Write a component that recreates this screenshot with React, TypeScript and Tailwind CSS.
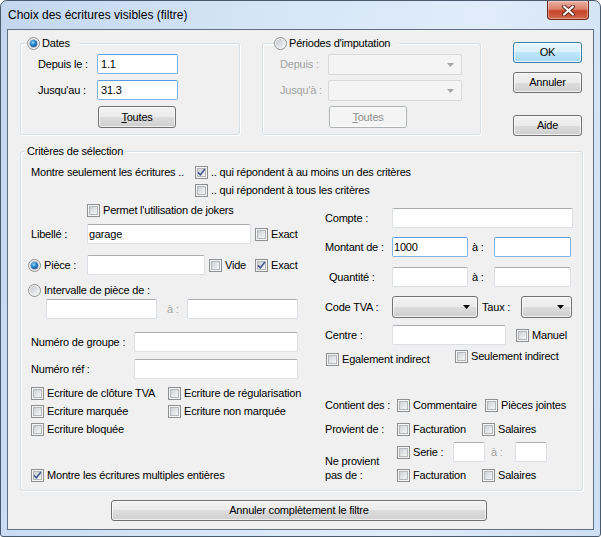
import React from 'react';

type Props = { children?: React.ReactNode; className?: string };

function Check({ checked = false }: { checked?: boolean }) {
  return (
    <span className="flex h-[13px] w-[13px] shrink-0 items-center justify-center border border-[#8e8f8f] bg-[#f4f4f4]">
      <span className="flex h-[9px] w-[9px] items-center justify-center border border-[#b4b8bd] bg-[linear-gradient(135deg,#cdd1d6,#f6f6f6)]">
        {checked && (
          <svg width="9" height="9" viewBox="0 0 9 9" className="shrink-0 overflow-visible">
            <path d="M1 4.3 L3.4 6.8 L7.9 1" fill="none" stroke="#4a5d94" strokeWidth="1.7" />
          </svg>
        )}
      </span>
    </span>
  );
}

function Radio({ checked = false }: { checked?: boolean }) {
  return (
    <span className="flex h-[13px] w-[13px] shrink-0 items-center justify-center rounded-full border border-[#8e8f8f] bg-[#f4f4f4]">
      {checked ? (
        <span className="flex h-[9px] w-[9px] items-center justify-center rounded-full bg-[#b9bec5]">
          <span className="h-[7px] w-[7px] rounded-full bg-[radial-gradient(circle_at_40%_35%,#8fd6ff_0%,#1f7fc8_45%,#0a3568_100%)]" />
        </span>
      ) : (
        <span className="h-[9px] w-[9px] rounded-full bg-[linear-gradient(135deg,#c4c8ce,#f5f5f5)]" />
      )}
    </span>
  );
}

function CheckLabel({ checked = false, children, className = '' }: Props & { checked?: boolean }) {
  return (
    <div className={`flex h-[13px] items-center ${className}`}>
      <Check checked={checked} />
      <span className="ml-[3px] whitespace-nowrap">{children}</span>
    </div>
  );
}

function Field({ className = '', value = '', focus = false }: { className?: string; value?: string; focus?: boolean }) {
  const skin = focus
    ? 'border-[#7eb4ea] border-t-[#569de5]'
    : 'border-[#dbdfe6] border-t-[#abadb3]';
  return (
    <div className={`flex h-[20px] shrink-0 items-center rounded-[2px] border bg-white ${skin} ${className}`}>
      {value}
    </div>
  );
}

function Btn({ children, className = '', def = false, disabled = false }: Props & { def?: boolean; disabled?: boolean }) {
  const skin = disabled
    ? 'border-[#adb2b5] bg-[#f4f4f4] text-[#8d8d8d]'
    : def
    ? 'border-[#3c7fb1] bg-[linear-gradient(#eaf6fd_0%,#d9f0fc_50%,#bee6fd_50%,#a7d9f5_100%)]'
    : 'border-[#707070] bg-[linear-gradient(#f2f2f2_0%,#ebebeb_50%,#dddddd_50%,#cfcfcf_100%)]';
  return (
    <div className={`flex shrink-0 items-center justify-center rounded-[3px] border shadow-[inset_0_0_0_1px_rgba(255,255,255,0.7)] ${skin} ${className}`}>
      {children}
    </div>
  );
}

function Combo({ className = '', disabled = false }: { className?: string; disabled?: boolean }) {
  const skin = disabled
    ? 'rounded-[2px] border-[#d9d9d9] bg-[#f4f4f4]'
    : 'rounded-[3px] border-[#707070] bg-[linear-gradient(#f2f2f2_0%,#ebebeb_50%,#dddddd_50%,#cfcfcf_100%)] shadow-[inset_0_0_0_1px_rgba(255,255,255,0.7)]';
  return (
    <div className={`flex shrink-0 items-center justify-end border pr-[7px] ${skin} ${className}`}>
      <svg width="7" height="4" viewBox="0 0 7 4">
        <polygon points="0,0 7,0 3.5,4" fill={disabled ? '#a6a6a6' : '#000'} />
      </svg>
    </div>
  );
}

function Group({ legend, children, className = '' }: Props & { legend: React.ReactNode }) {
  return (
    <div className={`relative shrink-0 rounded-[3px] border border-[#d5dfe5] shadow-[inset_1px_1px_0_#fff,1px_1px_0_#fff] ${className}`}>
      {legend}
      {children}
    </div>
  );
}

export default function App() {
  return (
    <div className="h-[537px] w-[601px] bg-white font-['Liberation_Sans',Arial,sans-serif] text-[11px] leading-[13px] tracking-[-0.2px] text-black">
      <div className="flex h-full w-full flex-col rounded-t-[7px] rounded-b-[3px] border border-[#4a5a6d] bg-[linear-gradient(100deg,#c2d7ef_0%,#d6e6f7_40%,#e0ecf9_70%,#cddff4_100%)]">
        {/* title bar */}
        <div className="flex h-[28px] shrink-0 items-start justify-between pl-[7px]">
          <span className="mt-[7px] text-[12px] leading-[14px] tracking-normal">Choix des écritures visibles (filtre)</span>
          <div className="mr-[11px] flex h-[19px] w-[42px] items-center justify-center rounded-b-[4px] border border-t-0 border-[#6b2a1c] bg-[linear-gradient(#eab0a2_0%,#dc8069_45%,#c7432a_55%,#d2694b_100%)] shadow-[inset_0_0_0_1px_rgba(255,255,255,0.35)]">
            <svg width="13" height="11" viewBox="0 0 13 11">
              <path d="M2 1.5 L11 9.5 M11 1.5 L2 9.5" stroke="#5a2418" strokeWidth="4" strokeLinecap="round" />
              <path d="M2 1.5 L11 9.5 M11 1.5 L2 9.5" stroke="#fff" strokeWidth="2.2" strokeLinecap="round" />
            </svg>
          </div>
        </div>

        {/* client */}
        <div className="flex flex-1 px-[6px] pb-[6px]">
          <div className="flex-1 border border-[#5f7085] bg-[#f0f0f0] pl-[12px] pt-[13px]">
            <div className="flex items-start">
              {/* Dates */}
              <Group
                className="h-[92px] w-[220px]"
                legend={
                  <div className="absolute left-[6px] top-[-7px] flex h-[13px] items-center bg-[#f0f0f0] pr-[9px]">
                    <Radio checked />
                    <span className="ml-[2px]">Dates</span>
                  </div>
                }
              >
                <div className="pl-[17px] pt-[10px]">
                  <div className="flex h-[20px] items-center">
                    <span className="w-[59px]">Depuis le :</span>
                    <Field className="w-[81px] pl-[3px]" value="1.1" focus />
                  </div>
                  <div className="mt-[6px] flex h-[20px] items-center">
                    <span className="w-[59px]">Jusqu'au :</span>
                    <Field className="w-[81px] pl-[3px]" value="31.3" focus />
                  </div>
                  <Btn className="ml-[60px] mt-[6px] h-[22px] w-[78px]">
                    <span><span className="underline">T</span>outes</span>
                  </Btn>
                </div>
              </Group>

              {/* Périodes */}
              <Group
                className="ml-[22px] h-[92px] w-[219px]"
                legend={
                  <div className="absolute left-[11px] top-[-7px] flex h-[13px] items-center bg-[#f0f0f0] pr-[9px]">
                    <Radio />
                    <span className="ml-[2px]">Périodes d'imputation</span>
                  </div>
                }
              >
                <div className="pl-[17px] pt-[10px] text-[#a3a3a3]">
                  <div className="flex h-[21px] items-center">
                    <span className="w-[48px]">Depuis :</span>
                    <Combo className="h-[21px] w-[134px]" disabled />
                  </div>
                  <div className="mt-[5px] flex h-[21px] items-center">
                    <span className="w-[48px]">Jusqu'à :</span>
                    <Combo className="h-[21px] w-[134px]" disabled />
                  </div>
                  <Btn className="ml-[49px] mt-[5px] h-[22px] w-[78px]" disabled>
                    <span><span className="underline">T</span>outes</span>
                  </Btn>
                </div>
              </Group>

              {/* Buttons */}
              <div className="ml-[32px] mt-[-1px] flex w-[69px] flex-col">
                <Btn className="h-[21px] w-[69px]" def>OK</Btn>
                <Btn className="mt-[9px] h-[21px] w-[69px]">Annuler</Btn>
                <Btn className="mt-[22px] h-[21px] w-[69px]">Aide</Btn>
              </div>
            </div>

            {/* Critères */}
            <Group
              className="mt-[15px] h-[340px] w-[563px]"
              legend={
                <div className="absolute left-[4px] top-[-8px] flex h-[14px] items-center bg-[#f0f0f0] px-[2px]">
                  Critères de sélection
                </div>
              }
            >
              <div className="pl-[10px] pt-[14px]">
                <div className="flex items-start">
                  <div className="flex h-[13px] w-[164px] items-center">Montre seulement les écritures ..</div>
                  <div className="flex flex-col gap-[5px]">
                    <CheckLabel checked>.. qui répondent à au moins un des critères</CheckLabel>
                    <CheckLabel>.. qui répondent à tous les critères</CheckLabel>
                  </div>
                </div>

                <div className="mt-[7px] flex items-start">
                  {/* left column */}
                  <div className="w-[294px] shrink-0">
                    <CheckLabel className="ml-[56px]">Permet l'utilisation de jokers</CheckLabel>

                    <div className="mt-[7px] flex h-[20px] items-center">
                      <span className="w-[56px]">Libellé :</span>
                      <Field className="w-[164px] pl-[1px]" value="garage" />
                      <CheckLabel className="ml-[4px]">Exact</CheckLabel>
                    </div>

                    <div className="ml-[-3px] mt-[11px] flex h-[20px] items-center">
                      <div className="flex w-[59px] items-center">
                        <Radio checked />
                        <span className="ml-[3px]">Pièce :</span>
                      </div>
                      <Field className="w-[118px]" />
                      <CheckLabel className="ml-[4px] w-[46px]">Vide</CheckLabel>
                      <CheckLabel checked>Exact</CheckLabel>
                    </div>

                    <div className="ml-[-3px] mt-[9px] flex h-[13px] items-center">
                      <Radio />
                      <span className="ml-[3px]">Intervalle de pièce de :</span>
                    </div>

                    <div className="ml-[15px] mt-[2px] flex h-[20px] items-center">
                      <Field className="w-[111px]" />
                      <span className="ml-[10px] w-[20px] text-[#a3a3a3]">à :</span>
                      <Field className="w-[111px]" />
                    </div>

                    <div className="mt-[13px] flex h-[20px] items-center">
                      <span className="w-[103px]">Numéro de groupe :</span>
                      <Field className="w-[164px]" />
                    </div>

                    <div className="mt-[7px] flex h-[20px] items-center">
                      <span className="w-[103px]">Numéro réf :</span>
                      <Field className="w-[164px]" />
                    </div>

                    <div className="mt-[8px] flex flex-col gap-[5px]">
                      <div className="flex">
                        <CheckLabel className="w-[137px]">Ecriture de clôture TVA</CheckLabel>
                        <CheckLabel>Ecriture de régularisation</CheckLabel>
                      </div>
                      <div className="flex">
                        <CheckLabel className="w-[137px]">Ecriture marquée</CheckLabel>
                        <CheckLabel>Ecriture non marquée</CheckLabel>
                      </div>
                      <CheckLabel>Ecriture bloquée</CheckLabel>
                    </div>

                    <CheckLabel className="mt-[33px]" checked>Montre les écritures multiples entières</CheckLabel>
                  </div>

                  {/* right column */}
                  <div className="mt-[4px] flex-1">
                    <div className="flex h-[20px] items-center">
                      <span className="w-[67px]">Compte :</span>
                      <Field className="w-[181px]" />
                    </div>

                    <div className="mt-[9px] flex h-[20px] items-center">
                      <span className="w-[67px]">Montant de :</span>
                      <Field className="w-[76px] pl-[1px]" value="1000" focus />
                      <span className="w-[26px] pl-[4px]">à :</span>
                      <Field className="w-[77px]" focus />
                    </div>

                    <div className="mt-[10px] flex h-[20px] items-center">
                      <span className="w-[67px] pl-[4px]">Quantité :</span>
                      <Field className="w-[76px]" />
                      <span className="w-[26px] pl-[4px]">à :</span>
                      <Field className="w-[77px]" />
                    </div>

                    <div className="mt-[9px] flex h-[22px] items-center">
                      <span className="w-[67px]">Code TVA :</span>
                      <Combo className="h-[22px] w-[86px]" />
                      <span className="w-[43px] pl-[4px]">Taux :</span>
                      <Combo className="h-[22px] w-[51px]" />
                    </div>

                    <div className="mt-[7px] flex h-[20px] items-center">
                      <span className="w-[67px]">Centre :</span>
                      <Field className="w-[114px]" />
                      <CheckLabel className="ml-[10px]">Manuel</CheckLabel>
                    </div>

                    <div className="mt-[8px] flex items-start">
                      <CheckLabel className="ml-[1px] w-[129px]">Egalement indirect</CheckLabel>
                      <CheckLabel className="mt-[-3px]">Seulement indirect</CheckLabel>
                    </div>

                    <div className="mt-[33px] flex items-center">
                      <span className="w-[72px]">Contient des :</span>
                      <CheckLabel className="w-[88px]">Commentaire</CheckLabel>
                      <CheckLabel>Pièces jointes</CheckLabel>
                    </div>

                    <div className="mt-[11px] flex items-center">
                      <span className="w-[72px]">Provient de :</span>
                      <CheckLabel className="w-[85px]">Facturation</CheckLabel>
                      <CheckLabel>Salaires</CheckLabel>
                    </div>

                    <div className="mt-[6px] flex items-stretch">
                      <div className="flex w-[72px] flex-col justify-end leading-[14px]">
                        <span>Ne provient</span>
                        <span>pas de :</span>
                      </div>
                      <div className="flex flex-col">
                        <div className="flex h-[20px] items-center">
                          <CheckLabel className="w-[56px]">Serie :</CheckLabel>
                          <Field className="w-[32px]" />
                          <span className="w-[30px] pl-[6px] text-[#a3a3a3]">à :</span>
                          <Field className="w-[32px]" />
                        </div>
                        <div className="mt-[7px] flex">
                          <CheckLabel className="w-[85px]">Facturation</CheckLabel>
                          <CheckLabel>Salaires</CheckLabel>
                        </div>
                      </div>
                    </div>
                  </div>
                </div>
              </div>
            </Group>

            <Btn className="ml-[91px] mt-[9px] h-[21px] w-[376px]">Annuler complètement le filtre</Btn>
          </div>
        </div>
      </div>
    </div>
  );
}
